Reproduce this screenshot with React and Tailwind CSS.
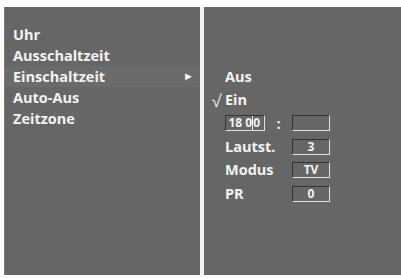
import React from 'react';

const menu = ['Uhr', 'Ausschaltzeit', 'Einschaltzeit', 'Auto-Aus', 'Zeitzone'];

const Box = ({ children, className = '' }) => (
  <div
    className={`h-[16px] border border-t-[#353535] border-l-[#353535] border-b-[#e0e0e0] border-r-[#e0e0e0] flex items-center justify-center text-[12px] leading-none ${className}`}
  >
    {children}
  </div>
);

const Row = ({ mark, children }) => (
  <div className="flex items-center h-[23.4px]">
    <div className="w-[21px] flex justify-end pr-[4px] text-[17px] font-normal text-[#e8e8e8] leading-none">{mark}</div>
    {children}
  </div>
);

export default function App() {
  return (
    <div
      className="w-[401px] h-[278px] bg-white flex pt-[7px] pl-[4px] pb-[3px] text-[#f3f3f3] font-bold"
      style={{ fontFamily: '"Open Sans", "Noto Sans", sans-serif' }}
    >
      {/* left menu */}
      <div className="w-[196px] bg-[#666666] border-l border-[#7a7a7a] pt-[17px]">
        {menu.map((item) => (
          <div
            key={item}
            className={`flex items-center justify-between h-[21px] pl-[8px] pr-[6px] text-[14.5px] ${
              item === 'Einschaltzeit' ? 'bg-[#6b6b6b]' : ''
            }`}
          >
            <span>{item}</span>
            {item === 'Einschaltzeit' && <span className="text-[11px]">►</span>}
          </div>
        ))}
      </div>

      {/* divider */}
      <div className="w-[4px] bg-[#f2f2f2]" />

      {/* right submenu */}
      <div className="flex-1 bg-[#666666] pt-[58px] text-[14.5px]">
        <Row>
          <span>Aus</span>
        </Row>
        <Row mark="√">
          <span>Ein</span>
        </Row>
        <Row>
          <Box className="w-[40px] justify-end pr-[4px]">
            <span>18 0</span>
            <span className="border-l border-[#f3f3f3] h-[14px] flex items-center">0</span>
          </Box>
          <span className="w-[27px] text-center">:</span>
          <Box className="w-[38px]" />
        </Row>
        <Row>
          <span className="w-[67px]">Lautst.</span>
          <Box className="w-[38px]">3</Box>
        </Row>
        <Row>
          <span className="w-[67px]">Modus</span>
          <Box className="w-[38px]">TV</Box>
        </Row>
        <Row>
          <span className="w-[67px]">PR</span>
          <Box className="w-[38px]">0</Box>
        </Row>
      </div>
    </div>
  );
}
